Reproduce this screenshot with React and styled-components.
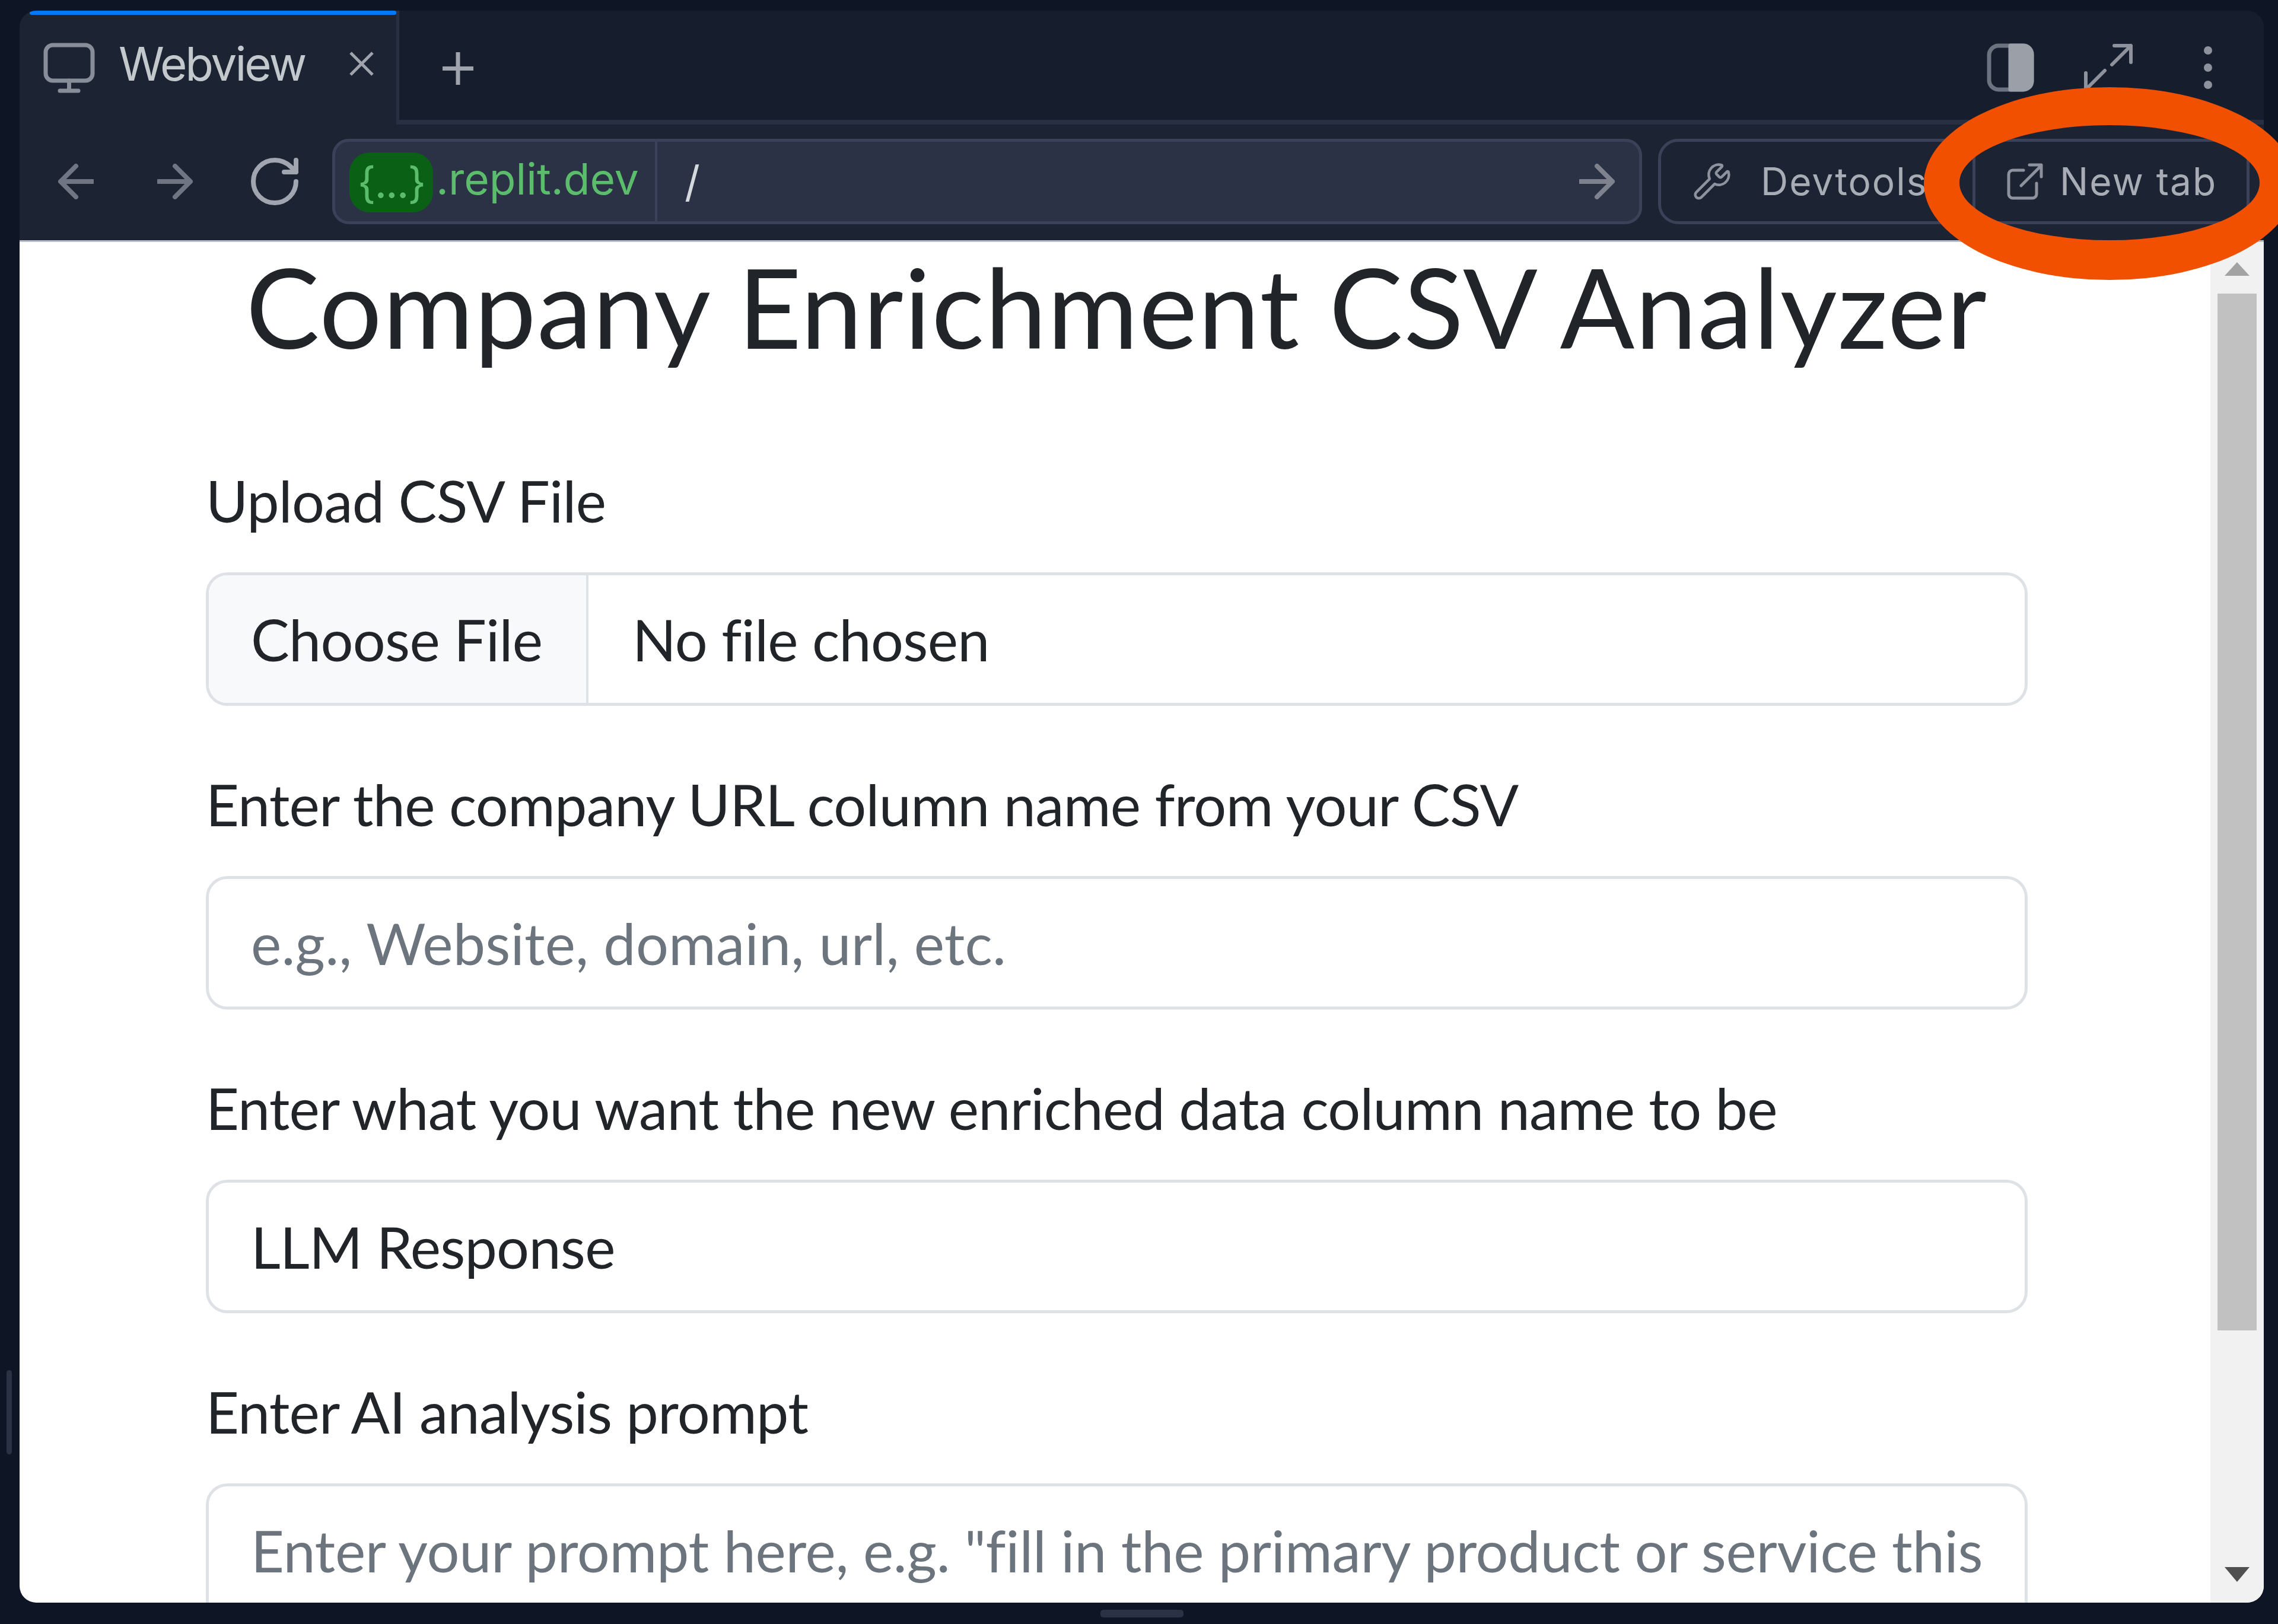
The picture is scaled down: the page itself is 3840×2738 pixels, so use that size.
import React from "react";
import styled, { createGlobalStyle } from "styled-components";
import { Wrench, RotateCw } from "lucide-react";

const Global = createGlobalStyle`
  html, body { margin: 0; padding: 0; background: #0e1525; }
  * { box-sizing: border-box; }
`;

const Screen = styled.div`
  position: relative;
  width: 3840px;
  height: 2738px;
  overflow: hidden;
  background: #0e1525;
  display: grid;
  grid-template-columns: 33px 3783px 24px;
  grid-template-rows: 18px 2684px 36px;
`;
const LeftGutter = styled.div`
  grid-column: 1; grid-row: 2;
  display: flex;
  padding: 2292px 0 0 11px;
`;
const SideGrip = styled.div`
  width: 9px; height: 142px; border-radius: 5px; background: #2b3245;
`;
const BottomGutter = styled.div`
  grid-column: 2; grid-row: 3;
  display: flex;
  padding: 12px 0 0 1822px;
`;
const BottomGrip = styled.div`
  width: 140px; height: 13px; border-radius: 5px; background: #2b3245;
`;
const Panel = styled.main`
  grid-column: 2; grid-row: 2;
  display: flex;
  flex-direction: column;
  border-radius: 28px;
  overflow: hidden;
  background: #1c2333;
  font-family: Inter, "Liberation Sans", sans-serif;
`;
const TabBar = styled.div`
  height: 192px;
  flex: none;
  display: flex;
  background: #161d2d;
  border-bottom: 8px solid #282f43;
`;
const Tab = styled.div`
  position: relative;
  width: 640px;
  height: 192px;
  flex: none;
  display: flex;
  align-items: flex-start;
  padding: 54px 0 0 40px;
  background: #1c2333;
  border-right: 5px solid #282f43;
  color: #c2c8cc;
  font-size: 78px;
  line-height: 71px;
  &::before {
    content: "";
    position: absolute;
    top: 0; left: 17px; right: 0;
    height: 7px;
    background: #0079f2;
    border-radius: 3px;
  }
`;
const TabLabel = styled.span`
  margin-left: 40px;
  width: 387px;
  flex: none;
  letter-spacing: -3px;
`;
const TabClose = styled.svg`
  width: 45px; height: 45px; margin-top: 13px; flex: none;
`;
const AddTab = styled.svg`
  width: 52px; height: 55px; margin: 70px 0 0 73px; flex: none;
`;
const TabActions = styled.div`
  margin-left: auto;
  display: flex;
  align-items: flex-start;
  padding: 55px 0 0 0;
`;
const ActionSlot = styled.div`
  width: ${(p) => p.$w}px;
  height: 82px;
  flex: none;
  display: flex;
`;
const Toolbar = styled.div`
  height: 195px;
  flex: none;
  display: flex;
  align-items: center;
  padding: 0 24px 4px 65px;
  background: #1c2333;
`;
const NavSlot = styled.div`
  width: ${(p) => p.$w}px;
  flex: none;
  display: flex;
  align-items: center;
`;
const Address = styled.div`
  width: 2208px;
  height: 144px;
  flex: none;
  display: flex;
  align-items: center;
  background: #2b3245;
  border: 5px solid #3a4159;
  border-radius: 28px;
`;
const Host = styled.div`
  height: 100%;
  width: 543px;
  flex: none;
  display: flex;
  align-items: center;
  padding-left: 24px;
  border-right: 4px solid #3a4159;
  color: #5bbd6c;
  font-size: 73px;
  line-height: 80px;
`;
const HostChip = styled.span`
  width: 141px;
  height: 101px;
  flex: none;
  display: flex;
  align-items: center;
  justify-content: center;
  margin-top: 4px;
  border-radius: 34px;
  background: #0a6015;
  font-size: 72px;
  letter-spacing: -2px;
`;
const HostName = styled.span`
  margin: 0 0 8px 5px;
`;
const Path = styled.span`
  margin-left: 46px;
  color: #d5d8dd;
  font-size: 72px;
  flex: 1;
`;
const Go = styled.div`
  width: 60px; height: 60px; margin-right: 41px; flex: none;
`;
const ButtonGroup = styled.div`
  margin-left: 27px;
  width: 997px;
  height: 144px;
  flex: none;
  display: flex;
  border: 5px solid #3a4159;
  border-radius: 34px;
  color: #a7acb5;
  font-size: 64px;
  letter-spacing: 2px;
`;
const ToolButton = styled.div`
  width: ${(p) => p.$w}px;
  flex: none;
  display: flex;
  align-items: center;
  padding-left: ${(p) => p.$pad}px;
  gap: ${(p) => p.$gap}px;
  & + & { border-left: 5px solid #3a4159; }
`;
const Body = styled.div`
  flex: 1;
  min-height: 0;
  display: flex;
  background: #fff;
  border-top: 3px solid #b9bec8;
  font-family: Lato, "Noto Sans", sans-serif;
  color: #212529;
`;
const Content = styled.div`
  flex: 1;
  min-width: 0;
  overflow: hidden;
  padding: 0 308px 0 314px;
`;
const Title = styled.h1`
  margin: 0;
  font-size: 186px;
  font-weight: 400;
  letter-spacing: 1.400px;
  line-height: 216px;
  text-align: center;
  white-space: nowrap;
`;
const Field = styled.div`
  margin-top: ${(p) => p.$top}px;
`;
const Label = styled.label`
  display: block;
  font-size: 97px;
  letter-spacing: -0.700px;
  line-height: 150px;
  margin-bottom: 46px;
`;
const FileBox = styled.div`
  display: flex;
  height: 225px;
  border: 5px solid #dee2e6;
  border-radius: 36px;
  overflow: hidden;
  font-size: 97px;
  letter-spacing: -0.700px;
  align-items: stretch;
`;
const FileButton = styled.div`
  width: 640px;
  flex: none;
  display: flex;
  align-items: center;
  padding-left: 71px;
  background: #f8f9fa;
  border-right: 4px solid #dee2e6;
`;
const FileName = styled.div`
  display: flex;
  align-items: center;
  padding-left: 74px;
`;
const TextInput = styled.input`
  display: block;
  width: 100%;
  height: 225px;
  padding: 0 71px;
  border: 5px solid #dee2e6;
  border-radius: 36px;
  background: #fff;
  color: #212529;
  outline: none;
  letter-spacing: -0.700px;
  font: 400 97px/150px Lato, "Noto Sans", sans-serif;
  &::placeholder { color: #6c757d; opacity: 1; letter-spacing: 0.200px; }
`;
const PromptInput = styled.textarea`
  display: block;
  width: 100%;
  height: 400px;
  padding: 33px 20px 33px 71px;
  border: 5px solid #dee2e6;
  border-radius: 36px;
  background: #fff;
  outline: none;
  resize: none;
  overflow: hidden;
  font: 400 97px/150px Lato, "Noto Sans", sans-serif;
  &::placeholder { color: #6c757d; opacity: 1; letter-spacing: -0.250px; }
`;
const Scrollbar = styled.div`
  width: 90px;
  flex: none;
  display: flex;
  flex-direction: column;
  align-items: center;
  padding-top: 34px;
  background: #f1f1f1;
`;
const ArrowUp = styled.div`
  width: 0; height: 0;
  border-left: 21px solid transparent;
  border-right: 21px solid transparent;
  border-bottom: 23px solid #a3a3a3;
`;
const Thumb = styled.div`
  width: 66px;
  height: 1748px;
  margin-top: 30px;
  background: #c1c1c1;
`;
const ArrowDown = styled.div`
  width: 0; height: 0;
  margin-top: auto;
  margin-bottom: 35px;
  border-left: 21px solid transparent;
  border-right: 21px solid transparent;
  border-top: 25px solid #505050;
`;
const Annotation = styled.svg`
  position: absolute;
  left: 0; top: 0;
  width: 3840px; height: 2738px;
  pointer-events: none;
`;

const Stroke = ({ w, h, vb, c = "#7d828e", sw = 8, children, ...rest }) => (
  <svg width={w} height={h} viewBox={vb || `0 0 ${w} ${h}`} fill="none" stroke={c} strokeWidth={sw} strokeLinecap="round" strokeLinejoin="round" {...rest}>
    {children}
  </svg>
);

const ArrowLeftIcon = () => (
  <Stroke w={60} h={60} c="#6f7583">
    <path d="M58 30H6M30 4 4 30l26 26" />
  </Stroke>
);
const ArrowRightIcon = ({ c = "#6f7583" }) => (
  <Stroke w={60} h={60} c={c}>
    <path d="M2 30h52M30 4l26 26-26 26" />
  </Stroke>
);

export default function App() {
  return (
    <>
      <Global />
      <Screen>
        <LeftGutter><SideGrip /></LeftGutter>
        <Panel>
          <TabBar>
            <Tab>
              <Stroke w={87} h={85} c="#878d99" sw={7} style={{ flex: "none" }}>
                <rect x="4" y="4" width="79" height="60" rx="12" />
                <path d="M43.5 64v16M28 81h31" />
              </Stroke>
              <TabLabel>Webview</TabLabel>
              <TabClose viewBox="0 0 45 45" fill="none" stroke="#9ea3ad" strokeWidth="5"><path d="M4 4l37 37M41 4 4 41" /></TabClose>
            </Tab>
            <AddTab viewBox="0 0 52 55" fill="none" stroke="#9ea3ad" strokeWidth="7"><path d="M26 0v55M0 27.500h52" /></AddTab>
            <TabActions>
              <ActionSlot $w={163}>
                <Stroke w={80} h={82} c="#6c7380" sw={7}>
                  <rect x="4" y="4" width="72" height="74" rx="16" />
                  <path d="M40 4h22a14 14 0 0 1 14 14v46a14 14 0 0 1-14 14H40z" fill="#9ba0a8" stroke="#9ba0a8" />
                </Stroke>
              </ActionSlot>
              <ActionSlot $w={202}>
                <Stroke w={84} h={82} c="#8d929c" sw={6}>
                  <path d="M48 36 80 4M52 4h28v28M36 46 4 78M4 50v28h28" />
                </Stroke>
              </ActionSlot>
              <ActionSlot $w={102}>
                <svg width="16" height="82" viewBox="0 0 16 82" fill="#8d929c">
                  <circle cx="8" cy="12" r="7" />
                  <circle cx="8" cy="41" r="7" />
                  <circle cx="8" cy="70" r="7" />
                </svg>
              </ActionSlot>
            </TabActions>
          </TabBar>
          <Toolbar>
            <NavSlot $w={167}><ArrowLeftIcon /></NavSlot>
            <NavSlot $w={150}><ArrowRightIcon /></NavSlot>
            <NavSlot $w={145}><RotateCw size={96} color="#a0a5b0" strokeWidth={2} /></NavSlot>
            <Address>
              <Host><HostChip>{"{...}"}</HostChip><HostName>.replit.dev</HostName></Host>
              <Path>/</Path>
              <Go><ArrowRightIcon c="#7d828e" /></Go>
            </Address>
            <ButtonGroup>
              <ToolButton $w={525} $pad={52} $gap={48}>
                <Wrench size={68} color="#8d929c" strokeWidth={1.6} />
                <span>Devtools</span>
              </ToolButton>
              <ToolButton $w={462} $pad={53} $gap={28}>
                <Stroke w={61} h={62} c="#8d929c" sw={5}>
                  <path d="M28 12H10a7 7 0 0 0-7 7v33a7 7 0 0 0 7 7h33a7 7 0 0 0 7-7V34M24 38 58 4M38 3h20v20" />
                </Stroke>
                <span>New tab</span>
              </ToolButton>
            </ButtonGroup>
          </Toolbar>
          <Body>
            <Content>
              <Title>Company Enrichment CSV Analyzer</Title>
              <Field $top={145}>
                <Label>Upload CSV File</Label>
                <FileBox>
                  <FileButton>Choose File</FileButton>
                  <FileName>No file chosen</FileName>
                </FileBox>
              </Field>
              <Field $top={91}>
                <Label>Enter the company URL column name from your CSV</Label>
                <TextInput readOnly placeholder="e.g., Website, domain, url, etc." />
              </Field>
              <Field $top={91}>
                <Label>Enter what you want the new enriched data column name to be</Label>
                <TextInput readOnly value="LLM Response" />
              </Field>
              <Field $top={91}>
                <Label>Enter AI analysis prompt</Label>
                <PromptInput readOnly placeholder={'Enter your prompt here, e.g. "fill in the primary product or service this company offers"'} />
              </Field>
            </Content>
            <Scrollbar>
              <ArrowUp />
              <Thumb />
              <ArrowDown />
            </Scrollbar>
          </Body>
        </Panel>
        <BottomGutter><BottomGrip /></BottomGutter>
        <Annotation viewBox="0 0 3840 2738">
          <path fill="#f05000" fillRule="evenodd" d="M3243 309.500a313 162.500 0 1 0 626 0a313 162.500 0 1 0-626 0zM3303 308a253 97 0 1 0 506 0a253 97 0 1 0-506 0z" />
        </Annotation>
      </Screen>
    </>
  );
}
